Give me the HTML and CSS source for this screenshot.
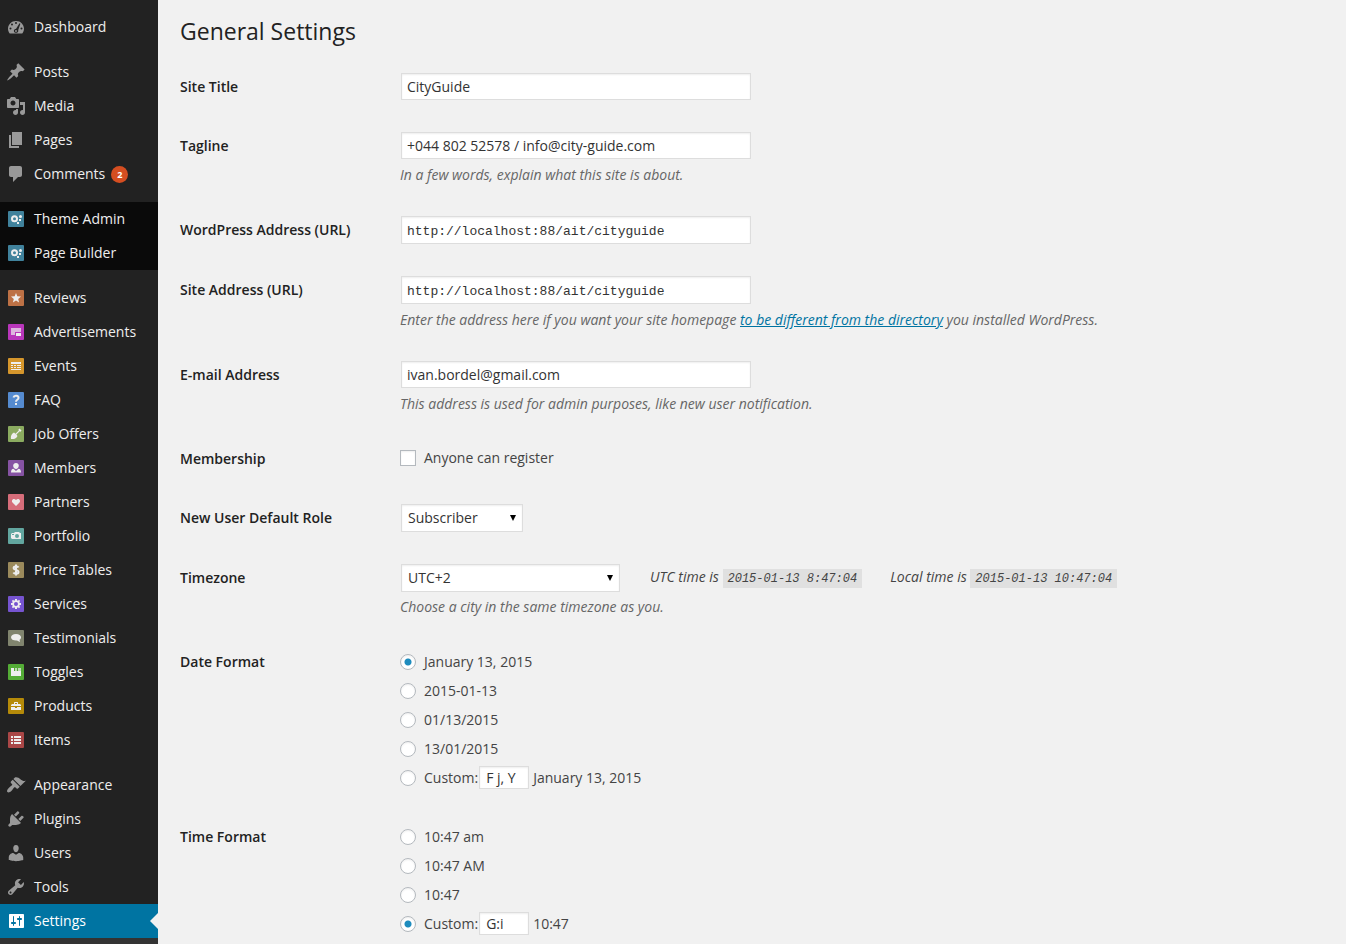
FILE: index.html
```html
<!DOCTYPE html>
<html lang="en">

<head>
    <meta charset="utf-8">
    <title>General Settings</title>
    <link rel="stylesheet" href="styles.css">
</head>

<body>
    <nav class="admin-menu">
        <ul>
            <li><a href="#"><svg class="icon" viewBox="0 0 20 20"><path fill-rule="evenodd" d="M3.76 16.500h12.480c1.100-1.370 1.760-2.800 1.760-4.700 0-4.420-3.580-7.800-8-7.800s-8 3.380-8 7.800c0 1.890.66 3.330 1.760 4.700zM10 5a1 1 0 1 1 0 2 1 1 0 0 1 0-2zM6 6.500a1 1 0 1 1 0 2 1 1 0 0 1 0-2zM13.500 6.300l.900.400-2.200 6.200c.5 1.700-.600 2.900-2.200 2.900-2 0-2.900-2.400-1.200-3.600l1.300-.5zM4.500 10.500a1 1 0 1 1 0 2 1 1 0 0 1 0-2zM15.500 10.500a1 1 0 1 1 0 2 1 1 0 0 1 0-2zM10 13.100a.9.9 0 1 0 0 1.800.9.9 0 0 0 0-1.800z"/></svg>Dashboard</a></li>
            <li class="group"><a href="#"><svg class="icon" viewBox="0 0 20 20"><path d="M10.44 3.02l1.82-1.82 6.36 6.35-1.83 1.82c-1.05-.68-2.48-.57-3.41.36l-.75.75c-.92.93-1.04 2.35-.35 3.41l-1.83 1.82-2.41-2.41-2.8 2.79c-.42.42-3.38 2.71-3.8 2.29s1.86-3.39 2.28-3.81l2.79-2.79L4.1 9.36l1.83-1.82c1.05.69 2.48.57 3.4-.36l.75-.75c.93-.92 1.05-2.35.36-3.41z"/></svg>Posts</a></li>
            <li><a href="#"><svg class="icon" viewBox="0 0 20 20"><path d="M13 11V4c0-.55-.45-1-1-1h-1.67L9 1H5L3.67 3H2c-.55 0-1 .45-1 1v7c0 .55.45 1 1 1h10c.55 0 1-.45 1-1zM7 4.5c1.38 0 2.5 1.12 2.5 2.5S8.38 9.5 7 9.5 4.5 8.38 4.5 7 5.62 4.5 7 4.5zM14 6h5v10.5c0 1.38-1.12 2.5-2.5 2.5S14 17.88 14 16.5s1.12-2.5 2.5-2.5c.17 0 .34.02.5.05V9h-3V6zm-4 8.05V13h2v3.5c0 1.38-1.12 2.5-2.5 2.5S7 17.88 7 16.5 8.12 14 9.5 14c.17 0 .34.02.5.05z"/></svg>Media</a></li>
            <li><a href="#"><svg class="icon" viewBox="0 0 20 20"><path d="M6 15V2h10v13H6zm-1 1h8v2H3V5h2v11z"/></svg>Pages</a></li>
            <li><a href="#"><svg class="icon" viewBox="0 0 20 20"><path d="M5 2h9c1.1 0 2 .9 2 2v7c0 1.1-.9 2-2 2h-2l-5 5v-5H5c-1.1 0-2-.9-2-2V4c0-1.1.9-2 2-2z"/></svg>Comments <span class="count">2</span></a></li>

            <li class="group dark"><a href="#"><svg class="icon" viewBox="0 0 20 20"><rect class="tile-theme" x="2" y="2" width="16" height="16" rx="1"/><g class="glyph"><path fill-rule="evenodd" d="M8.5 6.2a3.5 3.5 0 1 1 0 7 3.5 3.5 0 0 1 0-7zm0 2a1.5 1.5 0 1 0 0 3 1.5 1.5 0 0 0 0-3z"/><circle cx="14.500" cy="7.500" r="1.500"/><path d="M13 10h2v2h-2zM11 13h2v2h-2z"/></g></svg>Theme Admin</a></li>
            <li class="dark"><a href="#"><svg class="icon" viewBox="0 0 20 20"><rect class="tile-theme" x="2" y="2" width="16" height="16" rx="1"/><g class="glyph"><path fill-rule="evenodd" d="M8.5 6.2a3.5 3.5 0 1 1 0 7 3.5 3.5 0 0 1 0-7zm0 2a1.5 1.5 0 1 0 0 3 1.5 1.5 0 0 0 0-3z"/><circle cx="14.500" cy="7.500" r="1.500"/><path d="M13 10h2v2h-2zM11 13h2v2h-2z"/></g></svg>Page Builder</a></li>

            <li class="group"><a href="#"><svg class="icon" viewBox="0 0 20 20"><rect class="tile-reviews" x="2" y="2" width="16" height="16" rx="1"/><path class="glyph" d="M10 5l1.3 3.2 3.7.3-2.8 2.4.9 3.6-3.1-1.9-3.100 1.900.9-3.600L5 8.500l3.700-.3z"/></svg>Reviews</a></li>
            <li><a href="#"><svg class="icon" viewBox="0 0 20 20"><rect class="tile-ads" x="2" y="2" width="16" height="16" rx="1"/><path class="glyph faded" d="M5 6h10v7H5z"/><path class="tile-ads" d="M9 10h7v5H9z"/><path class="glyph" d="M10 11h5v3h-5z"/></svg>Advertisements</a></li>
            <li><a href="#"><svg class="icon" viewBox="0 0 20 20"><rect class="tile-events" x="2" y="2" width="16" height="16" rx="1"/><path class="glyph" d="M5 6h10v2H5zM5 9h2v1H5zM8 9h2v1H8zM11 9h4v1h-4zM5 11h2v1H5zM8 11h2v1H8zM11 11h4v1h-4zM5 13h10v1H5z"/></svg>Events</a></li>
            <li><a href="#"><svg class="icon" viewBox="0 0 20 20"><rect class="tile-faq" x="2" y="2" width="16" height="16" rx="1"/><path class="stroke" d="M7.500 7.500C8 5 12.700 5.300 12.500 8c-.1 1.800-2.500 1.700-2.500 3.700M10 13v2"/></svg>FAQ</a></li>
            <li><a href="#"><svg class="icon" viewBox="0 0 20 20"><rect class="tile-jobs" x="2" y="2" width="16" height="16" rx="1"/><path class="glyph" d="M5 15c-.3-2.500 0-4 1.500-5.500l1.500-1 1.500 1.200 3.300-3.300-.4-.9 1.100-.9 2 2-.9 1.100-.9-.4-3.300 3.300 1.100 1.400-1 1.500C9 15 7.500 15.300 5 15z"/></svg>Job Offers</a></li>
            <li><a href="#"><svg class="icon" viewBox="0 0 20 20"><rect class="tile-members" x="2" y="2" width="16" height="16" rx="1"/><path class="glyph" d="M10 5c3.600 0 3.400 4.200 1.300 5.500l-1.300.8-1.300-.8C6.600 9.200 6.400 5 10 5zM7.500 10.700L10 13l2.500-2.300c1.700.3 2.500 1.300 2.500 3.800H5c0-2.500.8-3.500 2.500-3.800z"/></svg>Members</a></li>
            <li><a href="#"><svg class="icon" viewBox="0 0 20 20"><rect class="tile-partners" x="2" y="2" width="16" height="16" rx="1"/><path class="glyph" d="M10 14l-3.500-3.500C4.800 8.500 7.500 5.300 10 7.900c2.500-2.600 5.200.6 3.500 2.600z"/></svg>Partners</a></li>
            <li><a href="#"><svg class="icon" viewBox="0 0 20 20"><rect class="tile-portfolio" x="2" y="2" width="16" height="16" rx="1"/><path class="glyph" fill-rule="evenodd" d="M6 7h2l1-1h4l1 1h1v6H6l-1-1V8zm5 1a2 2 0 1 0 0 4 2 2 0 0 0 0-4zM6 8h2v1H6z"/></svg>Portfolio</a></li>
            <li><a href="#"><svg class="icon" viewBox="0 0 20 20"><rect class="tile-prices" x="2" y="2" width="16" height="16" rx="1"/><path class="stroke" d="M12.500 7.500C11.500 6 7.500 6.200 7.600 8.200c.1 2.200 4.900 1.200 4.900 3.700 0 2.300-4.100 2.300-5.100.5M10 4.500v11"/></svg>Price Tables</a></li>
            <li><a href="#"><svg class="icon" viewBox="0 0 20 20"><rect class="tile-services" x="2" y="2" width="16" height="16" rx="1"/><path class="glyph" fill-rule="evenodd" d="M9 5h2v1.300l1 .4.9-.9 1.300 1.300-.9.9.4 1H15v2h-1.300l-.4 1 .9.9-1.300 1.300-.9-.9-1 .4V15H9v-1.300l-1-.4-.9.9-1.300-1.300.9-.9-.4-1H5V9h1.300l.4-1-.9-.9 1.300-1.300.9.9 1-.4zm1 3a2 2 0 1 0 0 4 2 2 0 0 0 0-4z"/></svg>Services</a></li>
            <li><a href="#"><svg class="icon" viewBox="0 0 20 20"><rect class="tile-testimonials" x="2" y="2" width="16" height="16" rx="1"/><path class="glyph" d="M10 6c3 0 5 1.300 5 3.200 0 1.300-.7 2.100-1.500 2.600l.5 2.200-3-1.500C7.500 12.800 5 11.300 5 9.200 5 7.300 7 6 10 6z"/></svg>Testimonials</a></li>
            <li><a href="#"><svg class="icon" viewBox="0 0 20 20"><rect class="tile-toggles" x="2" y="2" width="16" height="16" rx="1"/><path class="glyph faded" d="M9 6h2v3H9zM12 6h3v3h-3z"/><path class="glyph" d="M5 6h3v3h7v5H5z"/></svg>Toggles</a></li>
            <li><a href="#"><svg class="icon" viewBox="0 0 20 20"><rect class="tile-products" x="2" y="2" width="16" height="16" rx="1"/><path class="glyph" fill-rule="evenodd" d="M8 8V6.500L8.500 6h3l.5.500V8h2l1 1v1H5V9l1-1zm1 0h2V7H9zM5 11h4v1h2v-1h4v3H5z"/></svg>Products</a></li>
            <li><a href="#"><svg class="icon" viewBox="0 0 20 20"><rect class="tile-items" x="2" y="2" width="16" height="16" rx="1"/><path class="glyph" d="M5 6h2v2H5zM8 6h7v2H8zM5 9h2v2H5zM8 9h7v2H8zM5 12h2v2H5zM8 12h7v2H8z"/></svg>Items</a></li>

            <li class="group"><a href="#"><svg class="icon" viewBox="0 0 20 20"><path d="M14.48 11.06L7.41 3.99l1.5-1.5c.5-.56 2.3-.47 3.51.32 1.21.8 1.43 1.28 2.91 2.1 1.18.64 2.45 1.26 4.45.85zm-.71.71L6.7 4.7 4.93 6.47c-.39.39-.39 1.02 0 1.41l1.06 1.06c.39.39.39 1.03 0 1.42-.6.6-1.43 1.11-2.21 1.69-.35.26-.7.53-1.01.84C1.43 14.23.4 16.08 1.4 17.07c.99 1 2.84-.03 4.18-1.36.31-.31.58-.66.85-1.02.57-.78 1.08-1.61 1.69-2.21.39-.39 1.02-.39 1.41 0l1.06 1.06c.39.39 1.02.39 1.41 0z"/></svg>Appearance</a></li>
            <li><a href="#"><svg class="icon" viewBox="0 0 20 20"><path d="M13.11 4.36L9.87 7.6 8 5.73l3.24-3.24c.35-.34 1.05-.2 1.56.32.52.51.66 1.21.31 1.55zm-8 1.77l.91-1.12 9.01 9.01-1.19.84c-.71.71-2.63 1.16-3.82 1.16H6.14L4.9 17.26c-.59.59-1.54.59-2.12 0-.59-.58-.59-1.53 0-2.12l1.24-1.24v-3.88c0-1.13.4-3.19 1.09-3.89zm7.26 3.97l3.24-3.24c.34-.35 1.04-.21 1.55.31.52.51.66 1.21.31 1.55l-3.24 3.25z"/></svg>Plugins</a></li>
            <li><a href="#"><svg class="icon" viewBox="0 0 20 20"><path d="M10 9.25c-2.27 0-2.73-3.44-2.73-3.44C7 4.02 7.82 2 9.97 2c2.16 0 2.98 2.02 2.71 3.81 0 0-.41 3.44-2.68 3.44zm0 2.57L12.72 10c2.39 0 4.52 2.33 4.52 4.53v2.49s-3.65 1.13-7.24 1.13c-3.65 0-7.24-1.13-7.24-1.13v-2.49c0-2.25 1.94-4.48 4.47-4.48z"/></svg>Users</a></li>
            <li><a href="#"><svg class="icon" viewBox="0 0 20 20"><path d="M16.68 9.77c-1.34 1.34-3.3 1.67-4.95.99l-5.41 6.52c-.99.99-2.59.99-3.58 0s-.99-2.59 0-3.57l6.52-5.42c-.68-1.65-.35-3.61.99-4.95 1.28-1.28 3.12-1.62 4.72-1.06l-2.89 2.89 2.82 2.82 2.86-2.87c.53 1.58.18 3.39-1.08 4.65zM3.81 16.21c.4.39 1.04.39 1.43 0 .4-.4.4-1.04 0-1.43-.39-.4-1.03-.4-1.43 0-.39.39-.39 1.03 0 1.43z"/></svg>Tools</a></li>
            <li class="current"><a href="#"><svg class="icon" viewBox="0 0 20 20"><path d="M18 16V4c0-.55-.45-1-1-1H4c-.55 0-1 .45-1 1v12c0 .55.45 1 1 1h13c.55 0 1-.45 1-1zM8 11h1c.55 0 1 .45 1 1s-.45 1-1 1H8v1.5c0 .28-.22.5-.5.5s-.5-.22-.5-.5V13H6c-.55 0-1-.45-1-1s.45-1 1-1h1V5.5c0-.28.22-.5.5-.5s.5.22.5.5V11zm5-2h-1c-.55 0-1-.45-1-1s.45-1 1-1h1V5.5c0-.28.22-.5.5-.5s.5.22.5.5V7h1c.55 0 1 .45 1 1s-.45 1-1 1h-1v5.5c0 .28-.22.5-.5.5s-.5-.22-.5-.5V9z"/></svg>Settings</a></li>
        </ul>
        <div class="submenu"></div>
    </nav>

    <main class="content">
        <h1>General Settings</h1>
        <form>
            <div class="row">
                <label class="title" for="blogname">Site Title</label>
                <div class="field">
                    <input type="text" class="regular-text" id="blogname" value="CityGuide">
                </div>
            </div>
            <div class="row">
                <label class="title" for="tagline">Tagline</label>
                <div class="field">
                    <input type="text" class="regular-text" id="tagline" value="+044 802 52578 / info@city-guide.com">
                    <p class="description">In a few words, explain what this site is about.</p>
                </div>
            </div>
            <div class="row">
                <label class="title" for="siteurl">WordPress Address (URL)</label>
                <div class="field">
                    <input type="text" class="regular-text code" id="siteurl" value="http://localhost:88/ait/cityguide">
                </div>
            </div>
            <div class="row">
                <label class="title" for="home">Site Address (URL)</label>
                <div class="field">
                    <input type="text" class="regular-text code" id="home" value="http://localhost:88/ait/cityguide">
                    <p class="description">Enter the address here if you want your site homepage <a href="#">to be different from the directory</a> you installed WordPress.</p>
                </div>
            </div>
            <div class="row">
                <label class="title" for="email">E-mail Address</label>
                <div class="field">
                    <input type="text" class="regular-text" id="email" value="ivan.bordel@gmail.com">
                    <p class="description">This address is used for admin purposes, like new user notification.</p>
                </div>
            </div>
            <div class="row">
                <span class="title">Membership</span>
                <div class="field">
                    <div class="option single"><input type="checkbox" id="register"><label for="register">Anyone can register</label></div>
                </div>
            </div>
            <div class="row">
                <label class="title" for="role">New User Default Role</label>
                <div class="field">
                    <select id="role" class="role">
                        <option>Subscriber</option>
                    </select>
                </div>
            </div>
            <div class="row">
                <label class="title" for="timezone">Timezone</label>
                <div class="field">
                    <div class="timezone-line">
                        <select id="timezone" class="timezone">
                            <option>UTC+2</option>
                        </select>
                        <span class="time">UTC time is <code>2015-01-13 8:47:04</code></span>
                        <span class="time">Local time is <code>2015-01-13 10:47:04</code></span>
                    </div>
                    <p class="description">Choose a city in the same timezone as you.</p>
                </div>
            </div>
            <div class="row" role="radiogroup" aria-labelledby="date-title">
                <span class="title" id="date-title">Date Format</span>
                <div class="field">
                    <div class="option"><input type="radio" name="date" id="date1" checked><label for="date1">January 13, 2015</label></div>
                    <div class="option"><input type="radio" name="date" id="date2"><label for="date2">2015-01-13</label></div>
                    <div class="option"><input type="radio" name="date" id="date3"><label for="date3">01/13/2015</label></div>
                    <div class="option"><input type="radio" name="date" id="date4"><label for="date4">13/01/2015</label></div>
                    <div class="option"><input type="radio" name="date" id="date5"><label for="date5">Custom:</label><input type="text" class="small-text" aria-label="Custom date format" value="F j, Y"><span>January 13, 2015</span></div>
                </div>
            </div>
            <div class="row" role="radiogroup" aria-labelledby="time-title">
                <span class="title" id="time-title">Time Format</span>
                <div class="field">
                    <div class="option"><input type="radio" name="time" id="time1"><label for="time1">10:47 am</label></div>
                    <div class="option"><input type="radio" name="time" id="time2"><label for="time2">10:47 AM</label></div>
                    <div class="option"><input type="radio" name="time" id="time3"><label for="time3">10:47</label></div>
                    <div class="option"><input type="radio" name="time" id="time4" checked><label for="time4">Custom:</label><input type="text" class="small-text" aria-label="Custom time format" value="G:i"><span>10:47</span></div>
                </div>
            </div>
        </form>
    </main>
</body>

</html>
```
FILE: styles.css
```css
* {
    box-sizing: border-box;
}

body {
    margin: 0;
    min-height: 100vh;
    display: flex;
    background: #f1f1f1;
    color: #444;
    font: 14px/18px "Open Sans", sans-serif;
}

/* Left menu */
.admin-menu {
    display: flex;
    flex-direction: column;
    flex: none;
    width: 158px;
    padding-top: 10px;
    background: #222;
}

.admin-menu ul {
    margin: 0;
    padding: 0;
    list-style: none;
}

.admin-menu .group {
    margin-top: 11px;
}

.admin-menu a {
    display: flex;
    align-items: center;
    gap: 8px;
    height: 34px;
    padding-left: 6px;
    color: #eee;
    text-decoration: none;
    white-space: nowrap;
}

.icon {
    flex: none;
    width: 20px;
    height: 20px;
    fill: #999;
}

.admin-menu .dark {
    background: #0a0a0a;
}

.admin-menu .current {
    position: relative;
    background: #0074a2;
}

.current a {
    color: #fff;
}

.current .icon {
    fill: #fff;
}

.current::after {
    content: "";
    position: absolute;
    top: 9px;
    right: 0;
    border: 8px solid transparent;
    border-left: 0;
    border-right-color: #f1f1f1;
}

.submenu {
    flex: 1;
    min-height: 6px;
    background: #333;
}

.count {
    width: 17px;
    height: 17px;
    margin-left: -2px;
    border-radius: 50%;
    background: #d54e21;
    color: #fff;
    font-size: 9px;
    font-weight: 700;
    line-height: 17px;
    text-align: center;
}

/* Coloured menu icons */
.icon .glyph {
    fill: #eee;
}

.icon .faded {
    opacity: 0.7;
}

.icon .stroke {
    fill: none;
    stroke: #eee;
    stroke-width: 2;
}

.tile-theme { fill: #40829c; }
.tile-reviews { fill: #bd7145; }
.tile-ads { fill: #b936bb; }
.tile-events { fill: #d5962c; }
.tile-faq { fill: #558bd0; }
.tile-jobs { fill: #8bab60; }
.tile-members { fill: #8653a3; }
.tile-partners { fill: #d66d7a; }
.tile-portfolio { fill: #62a69f; }
.tile-prices { fill: #9b8a5c; }
.tile-services { fill: #7654d0; }
.tile-testimonials { fill: #80846e; }
.tile-toggles { fill: #54ac36; }
.tile-products { fill: #b58a09; }
.tile-items { fill: #aa4747; }

/* Settings form */
.content {
    flex: 1;
    min-width: 0;
    padding: 16px 20px 0 22px;
}

h1 {
    margin: 0 0 11px;
    color: #222;
    font-size: 23px;
    font-weight: 400;
    line-height: 30px;
}

.row {
    display: flex;
    padding: 15px 0;
}

.row:last-child {
    padding-bottom: 0;
}

.title {
    flex: none;
    width: 220px;
    padding-top: 6px;
    color: #222;
    font-weight: 600;
}

.field {
    flex: 1;
    min-width: 0;
}

input,
select {
    margin: 0;
    border: 1px solid #ddd;
    border-radius: 0;
    background: #fff;
    color: #333;
    font: inherit;
    box-shadow: inset 0 1px 2px rgba(0, 0, 0, 0.07);
}

.regular-text {
    display: block;
    width: 350px;
    max-width: 100%;
    height: 27px;
    margin: 1px;
    padding: 3px 5px;
}

.regular-text.code {
    height: 28px;
    padding-top: 5px;
    font-family: "Liberation Mono", monospace;
    font-size: 13px;
}

.description {
    margin: 6px 0 0;
    color: #666;
    font-style: italic;
    line-height: 20px;
}

.timezone-line + .description {
    margin-top: 4px;
}

.description a {
    color: #0074a2;
}

select {
    height: 28px;
    margin: 1px;
    padding: 0 6px;
    -webkit-appearance: none;
    appearance: none;
    background: #fff url("data:image/svg+xml,%3Csvg xmlns='http://www.w3.org/2000/svg' width='6' height='6'%3E%3Cpath d='M0 0h6L3 6z'/%3E%3C/svg%3E") no-repeat right 6px top 10px;
}

.role {
    width: 122px;
}

.timezone {
    width: 219px;
}

.timezone-line {
    display: flex;
    align-items: center;
    gap: 28px;
}

.timezone {
    margin-right: 2px;
}

.time {
    font-style: italic;
}

code {
    padding: 3px 5px 2px;
    background: #e0e0e0;
    font-family: "Liberation Mono", monospace;
    font-size: 12px;
}

.option {
    display: flex;
    align-items: center;
    height: 29px;
}

.single {
    padding-bottom: 2px;
}

input[type="radio"],
input[type="checkbox"] {
    flex: none;
    width: 16px;
    height: 16px;
    margin-right: 8px;
    border-color: #b4b9be;
    -webkit-appearance: none;
    appearance: none;
}

input[type="radio"] {
    border-radius: 50%;
}

input[type="radio"]:checked {
    background: radial-gradient(circle, #1e8cbe 3px, #fff 4px);
}

.small-text {
    width: 50px;
    height: 23px;
    margin: 0 4px 0 1px;
    padding: 1px 6px;
}
```
